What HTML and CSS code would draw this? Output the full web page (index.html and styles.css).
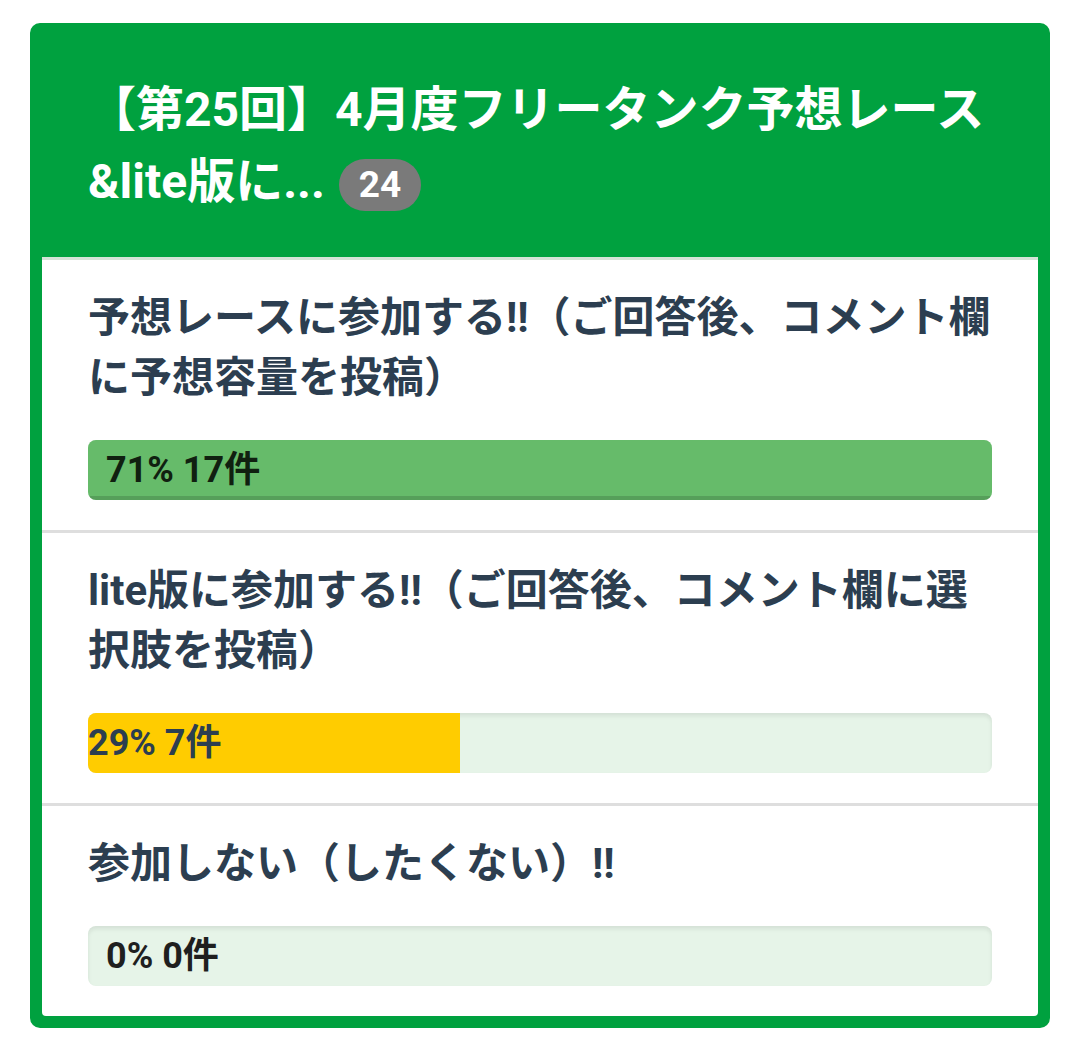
FILE: index.html
```html
<!DOCTYPE html>
<html lang="ja">
<head>
<meta charset="utf-8">
<link rel="stylesheet" href="styles.css">
</head>
<body>
<div class="card">
  <div class="header">
    <span class="title">【第25回】4月度フリータンク予想レース&amp;lite版に...</span>
    <span class="badge">24</span>
  </div>
  <div class="list">
    <div class="row">
      <div class="q">予想レースに参加する!!（ご回答後、コメント欄に予想容量を投稿）</div>
      <div class="bar">
        <div class="fill fill-green" style="width:100%">71% 17件</div>
      </div>
    </div>
    <div class="row">
      <div class="q">lite版に参加する!!（ご回答後、コメント欄に選択肢を投稿）</div>
      <div class="bar">
        <div class="fill fill-yellow" style="width:41.1%">29% 7件</div>
      </div>
    </div>
    <div class="row">
      <div class="q">参加しない（したくない）!!</div>
      <div class="bar">
        <div class="fill fill-empty">0% 0件</div>
      </div>
    </div>
  </div>
</div>
</body>
</html>
```
FILE: styles.css
```css
html, body {
  margin: 0;
  padding: 0;
  background: #ffffff;
}
body {
  font-family: Roboto, "Noto Sans CJK JP", sans-serif;
  font-weight: 700;
}
.card {
  margin: 23px 30px 0 30px;
  width: 996px;
  border: 12px solid #00a13f;
  border-radius: 10px;
  background: #00a13f;
  overflow: hidden;
}
.header {
  padding: 39px 40px 39px 46px;
  color: #ffffff;
  font-size: 48px;
  line-height: 72px;
}
.badge {
  display: inline-block;
  background: #7a7a7a;
  color: #ffffff;
  font-size: 37px;
  line-height: 52px;
  height: 52px;
  padding: 0 20px;
  border-radius: 26px;
  vertical-align: middle;
  margin-left: 2px;
}
.list {
  background: #ffffff;
  border-radius: 0 0 4px 4px;
}
.row {
  border-top: 3px solid #dedede;
  padding: 28px 46px 30px 46px;
}
.row:first-child {
  border-top-color: #d5e3d8;
}
.q {
  color: #2c3e50;
  font-size: 42px;
  line-height: 60px;
}
.bar {
  margin-top: 32px;
  height: 60px;
  background: #e6f4e8;
  border-radius: 8px;
  box-shadow: inset 0 3px 4px rgba(0, 0, 0, 0.08);
  overflow: hidden;
}
.fill {
  height: 60px;
  box-sizing: border-box;
  font-size: 36px;
  line-height: 60px;
  white-space: nowrap;
}
.fill-green {
  background: #66bb6a;
  color: #102010;
  padding-left: 18px;
  box-shadow: inset 0 -4px 0 rgba(0, 0, 0, 0.15);
}
.fill-yellow {
  background: #ffcc00;
  color: #2c3e50;
  padding-left: 0;
}
.fill-empty {
  color: #1f1f1f;
  padding-left: 18px;
}
```
